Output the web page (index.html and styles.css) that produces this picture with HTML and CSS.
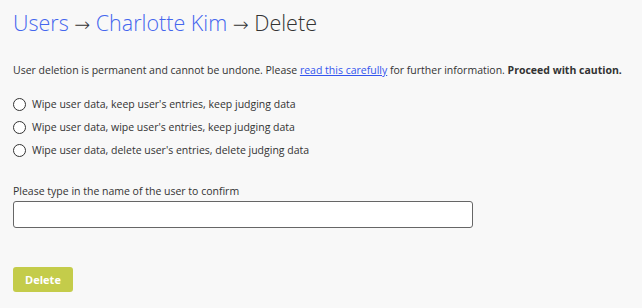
FILE: index.html
```html
<!DOCTYPE html>
<html>
<head>
<meta charset="utf-8">
<link rel="stylesheet" href="styles.css">
</head>
<body>
<main class="page">
  <h1 class="title"><a href="#" class="crumb">Users</a> <span class="arrow">→</span> <a href="#" class="crumb">Charlotte Kim</a> <span class="arrow">→</span> Delete</h1>
  <p class="warning">User deletion is permanent and cannot be undone. Please <a href="#" class="link">read this carefully</a> for further information. <strong>Proceed with caution.</strong></p>
  <div class="options">
    <label class="option"><input type="radio" name="mode" class="radio"><span>Wipe user data, keep user's entries, keep judging data</span></label>
    <label class="option"><input type="radio" name="mode" class="radio"><span>Wipe user data, wipe user's entries, keep judging data</span></label>
    <label class="option"><input type="radio" name="mode" class="radio"><span>Wipe user data, delete user's entries, delete judging data</span></label>
  </div>
  <div class="field">
    <label class="field-label">Please type in the name of the user to confirm</label>
    <input type="text" class="text-input">
  </div>
  <button class="btn-delete">Delete</button>
</main>
</body>
</html>
```
FILE: styles.css
```css
html, body {
  margin: 0;
  background: #f8f8f8;
}
body {
  font-family: "Open Sans", "Liberation Sans", sans-serif;
  color: #333;
}
.page {
  padding: 8px 13px;
}
.title {
  margin: 0;
  font-size: 21.5px;
  font-weight: 300;
  line-height: 30px;
  color: #333;
}
.arrow {
  font-family: "DejaVu Sans", sans-serif;
  font-weight: 200;
  font-size: 19px;
}
.crumb {
  color: #4466ee;
  text-decoration: none;
}
.warning {
  margin: 23px 0 0;
  font-size: 10.5px;
  line-height: 16px;
}
.warning strong {
  font-weight: 700;
}
.link {
  color: #3355ee;
}
.options {
  margin-top: 18px;
  display: flex;
  flex-direction: column;
  gap: 7px;
}
.option {
  display: flex;
  align-items: center;
  gap: 6px;
  font-size: 10.5px;
  line-height: 16px;
}
.radio {
  margin: 0;
  width: 13px;
  height: 13px;
  appearance: none;
  border: 1px solid #333;
  border-radius: 50%;
  background: #fff;
}
.field {
  margin-top: 25px;
  display: flex;
  flex-direction: column;
  gap: 2px;
}
.field-label {
  font-size: 10.5px;
  line-height: 16px;
}
.text-input {
  box-sizing: border-box;
  width: 460px;
  height: 27px;
  margin: 0;
  border: 1px solid #666;
  border-radius: 3px;
  background: #fff;
}
.btn-delete {
  margin-top: 39px;
  width: 60px;
  height: 25px;
  border: none;
  border-radius: 3px;
  background: #c4cc4a;
  color: #fff;
  font-family: "Open Sans", "Liberation Sans", sans-serif;
  font-weight: 700;
  font-size: 11px;
  padding: 0;
}
```
